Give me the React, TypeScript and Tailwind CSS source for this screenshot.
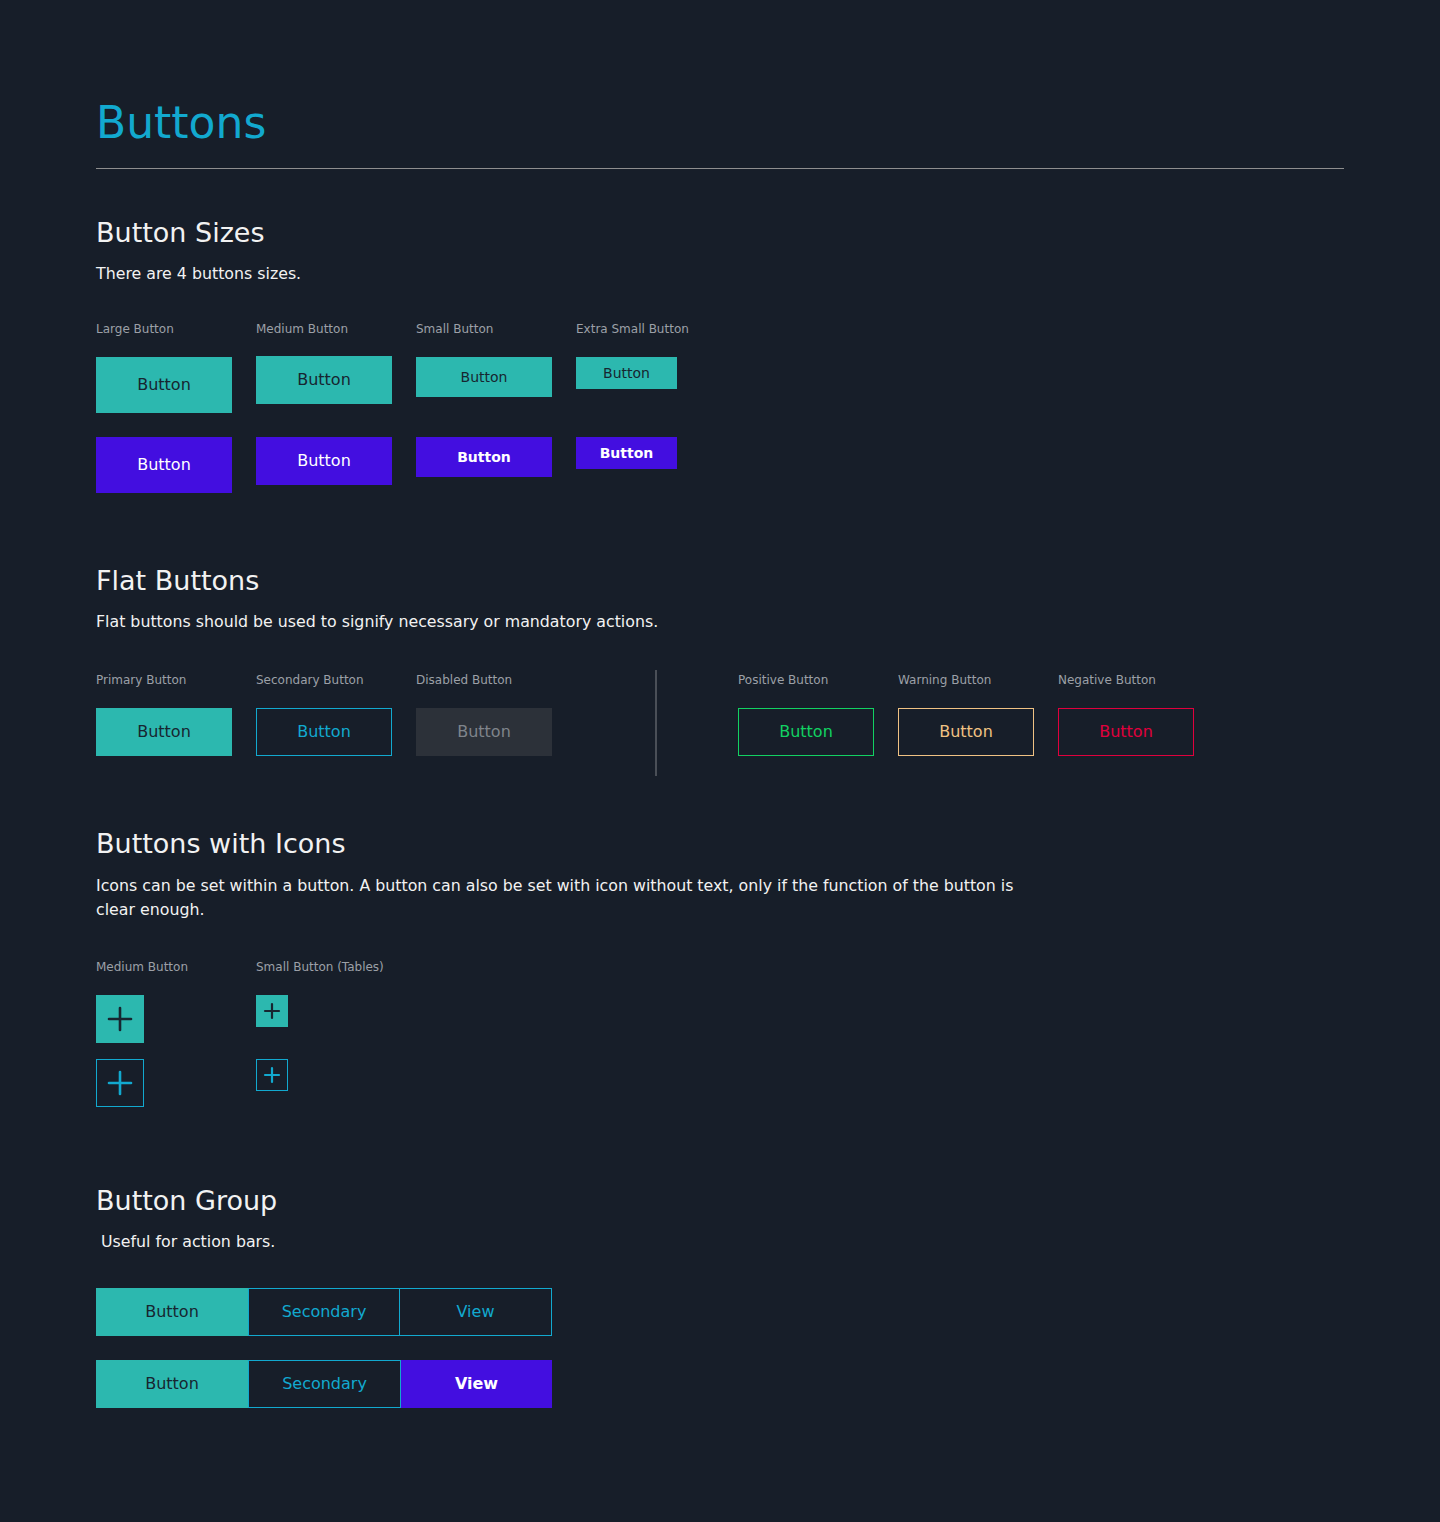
import type { ReactNode } from "react";

const FONT = "font-['DejaVu_Sans',_sans-serif]";

function Label({ children }: { children: ReactNode }) {
  return (
    <div className="h-4 text-[12px] leading-4 whitespace-nowrap text-[#9ca0a7]">
      {children}
    </div>
  );
}

function Heading({ children }: { children: ReactNode }) {
  return <h2 className="text-[27px] leading-[27px] text-[#f2f2f2]">{children}</h2>;
}

function Desc({ children, className = "mt-[16px]" }: { children: ReactNode; className?: string }) {
  return (
    <p className={`text-[15.8px] leading-6 text-[#f2f2f2] ${className}`}>
      {children}
    </p>
  );
}

function Plus({ size, stroke, color }: { size: number; stroke: number; color: string }) {
  const p = 2;
  return (
    <svg width={size} height={size} viewBox={`0 0 ${size} ${size}`} fill="none">
      <line x1={size / 2} y1={p} x2={size / 2} y2={size - p} stroke={color} strokeWidth={stroke} strokeLinecap="round" />
      <line x1={p} y1={size / 2} x2={size - p} y2={size / 2} stroke={color} strokeWidth={stroke} strokeLinecap="round" />
    </svg>
  );
}

export default function App() {
  return (
    <div className={`min-h-[1522px] bg-[#171e29] px-[96px] pt-[101px] pb-[114px] ${FONT}`}>
      <h1 className="text-[44px] leading-[44px] text-[#12a9cf]">Buttons</h1>
      <div className="mt-[23px] h-px bg-[#8e8e8e]" />

      {/* sizes */}
      <section className="mt-[50px]">
        <Heading>Button Sizes</Heading>
        <Desc>There are 4 buttons sizes.</Desc>
        <div className="mt-[35px] grid grid-cols-[136px_136px_136px_101px] grid-rows-[16px_76px_80px] gap-x-6 items-start">
          <Label>Large Button</Label>
          <Label>Medium Button</Label>
          <Label>Small Button</Label>
          <Label>Extra Small Button</Label>

          <button className="mt-[20px] flex h-14 w-[136px] items-center justify-center bg-[#2cb8af] text-[16px] text-[#172630]">Button</button>
          <button className="mt-[19px] flex h-12 w-[136px] items-center justify-center bg-[#2cb8af] text-[16px] text-[#172630]">Button</button>
          <button className="mt-[20px] flex h-10 w-[136px] items-center justify-center bg-[#2cb8af] text-[14px] text-[#172630]">Button</button>
          <button className="mt-[20px] flex h-8 w-[101px] items-center justify-center bg-[#2cb8af] text-[14px] text-[#172630]">Button</button>

          <button className="mt-[24px] flex h-14 w-[136px] items-center justify-center bg-[#430ee0] text-[16px] text-white">Button</button>
          <button className="mt-[24px] flex h-12 w-[136px] items-center justify-center bg-[#430ee0] text-[16px] text-white">Button</button>
          <button className="mt-[24px] flex h-10 w-[136px] items-center justify-center bg-[#430ee0] text-[14px] font-bold text-white">Button</button>
          <button className="mt-[24px] flex h-8 w-[101px] items-center justify-center bg-[#430ee0] text-[14px] font-bold text-white">Button</button>
        </div>
      </section>

      {/* flat */}
      <section className="mt-[74px]">
        <Heading>Flat Buttons</Heading>
        <Desc>Flat buttons should be used to signify necessary or mandatory actions.</Desc>
        <div className="mt-[38px] flex items-start">
          <div className="grid grid-cols-[136px_136px_136px] gap-x-6 gap-y-[20px]">
            <Label>Primary Button</Label>
            <Label>Secondary Button</Label>
            <Label>Disabled Button</Label>
            <button className="flex h-12 items-center justify-center bg-[#2cb8af] text-[16px] text-[#172630]">Button</button>
            <button className="flex h-12 items-center justify-center border border-[#12a9cf] text-[16px] text-[#12a9cf]">Button</button>
            <button className="flex h-12 items-center justify-center bg-[#2c3139] text-[16px] text-[#7f848b]">Button</button>
          </div>
          <div className="ml-[103px] -mt-[2px] -mb-[21px] h-[106px] w-[2px] bg-[#4a4f57]" />
          <div className="ml-[81px] grid grid-cols-[136px_136px_136px] gap-x-6 gap-y-[20px]">
            <Label>Positive Button</Label>
            <Label>Warning Button</Label>
            <Label>Negative Button</Label>
            <button className="flex h-12 items-center justify-center border border-[#12d162] text-[16px] text-[#12d162]">Button</button>
            <button className="flex h-12 items-center justify-center border border-[#f0c283] text-[16px] text-[#f0c283]">Button</button>
            <button className="flex h-12 items-center justify-center border border-[#e0003d] text-[16px] text-[#e0003d]">Button</button>
          </div>
        </div>
      </section>

      {/* icons */}
      <section className="mt-[74px]">
        <Heading>Buttons with Icons</Heading>
        <Desc className="mt-[17px]">
          Icons can be set within a button. A button can also be set with icon without text, only if the function of the button is
          <br />
          clear enough.
        </Desc>
        <div className="mt-[37px] grid grid-cols-[136px_136px] grid-rows-[16px_68px_64px] gap-x-6 items-start">
          <Label>Medium Button</Label>
          <Label>Small Button (Tables)</Label>
          <button className="mt-[20px] flex h-12 w-12 items-center justify-center bg-[#2cb8af]">
            <Plus size={26} stroke={2.6} color="#172630" />
          </button>
          <button className="mt-[20px] flex h-8 w-8 items-center justify-center bg-[#2cb8af]">
            <Plus size={18} stroke={2.2} color="#172630" />
          </button>
          <button className="mt-[16px] flex h-12 w-12 items-center justify-center border border-[#12a9cf]">
            <Plus size={26} stroke={2.6} color="#12a9cf" />
          </button>
          <button className="mt-[16px] flex h-8 w-8 items-center justify-center border border-[#12a9cf]">
            <Plus size={18} stroke={2.2} color="#12a9cf" />
          </button>
        </div>
      </section>

      {/* group */}
      <section className="mt-[80px]">
        <Heading>Button Group</Heading>
        <Desc className="mt-[16px] pl-[5px]">Useful for action bars.</Desc>
        <div className="mt-[34px] flex flex-col gap-6">
          <div className="flex">
            <button className="flex h-12 w-[152px] items-center justify-center bg-[#2cb8af] text-[16px] text-[#172630]">Button</button>
            <button className="flex h-12 w-[152px] items-center justify-center border border-[#12a9cf] text-[16px] text-[#12a9cf]">Secondary</button>
            <button className="flex h-12 w-[152px] items-center justify-center border border-l-0 border-[#12a9cf] text-[16px] text-[#12a9cf]">View</button>
          </div>
          <div className="flex">
            <button className="flex h-12 w-[152px] items-center justify-center bg-[#2cb8af] text-[16px] text-[#172630]">Button</button>
            <button className="flex h-12 w-[153px] items-center justify-center border border-[#12a9cf] text-[16px] text-[#12a9cf]">Secondary</button>
            <button className="flex h-12 w-[151px] items-center justify-center bg-[#430ee0] text-[16px] font-bold text-white">View</button>
          </div>
        </div>
      </section>
    </div>
  );
}
